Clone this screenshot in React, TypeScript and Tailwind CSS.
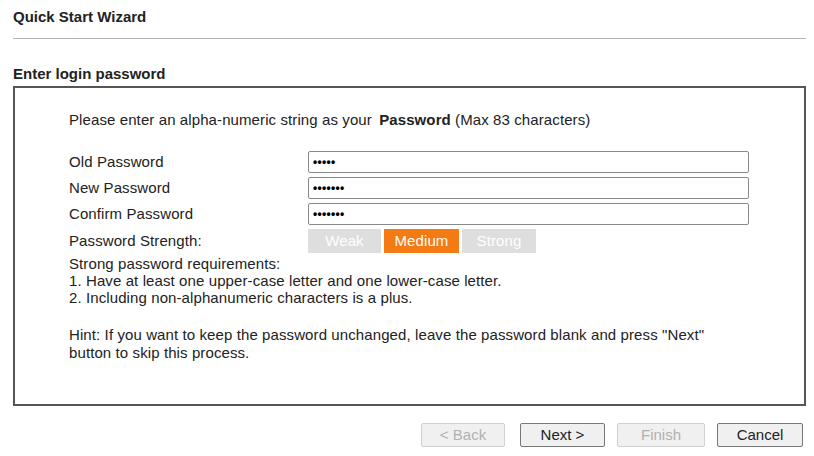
import * as React from 'react';

const fields = [
  { label: 'Old Password', dots: 5 },
  { label: 'New Password', dots: 7 },
  { label: 'Confirm Password', dots: 7 },
];

function Dots({ count }: { count: number }) {
  return (
    <span className="text-[12px] font-bold tracking-[0.3px] leading-none text-black">
      {'•'.repeat(count)}
    </span>
  );
}

export default function App() {
  return (
    <div className="w-[814px] h-[456px] bg-white text-[#222] font-['Liberation_Sans',Arial,sans-serif]">
      <div className="pl-[13px] pr-[8px]">
        <div className="pt-[8px] h-[38px] text-[15px] leading-[18px] font-bold">Quick Start Wizard</div>
        <div className="border-t border-[#b5b5b5]" />
      </div>

      <div className="pl-[13px] pr-[8px]">
        <div className="mt-[26px] text-[15px] leading-[18px] font-bold">Enter login password</div>
        <div className="mt-[3px] h-[320px] border-2 border-[#555] pl-[54px] pt-[23px] text-[15px] tracking-[0.1px]">
          <div className="leading-[17px]">
            Please enter an alpha-numeric string as your <span className="font-bold ml-[3px]">Password</span> (Max 83 characters)
          </div>

          <div className="mt-[23px] grid grid-cols-[239px_441px] gap-y-[4px]">
            {fields.map((f) => (
              <React.Fragment key={f.label}>
                <div className="flex items-center h-[22px]">{f.label}</div>
                <div className="h-[22px] border border-[#8a8a8a] rounded-[2px] flex items-center pl-[4px]">
                  <Dots count={f.dots} />
                </div>
              </React.Fragment>
            ))}
            <div className="flex items-center h-[24px]">Password Strength:</div>
            <div className="flex gap-[3px] h-[24px]">
              <div className="w-[73px] bg-[#dedede] text-white flex items-center justify-center">Weak</div>
              <div className="w-[75px] bg-[#f47a14] text-white flex items-center justify-center">Medium</div>
              <div className="w-[74px] bg-[#dedede] text-white flex items-center justify-center">Strong</div>
            </div>
          </div>

          <div className="mt-[2px] leading-[17px]">
            <div>Strong password requirements:</div>
            <div>1. Have at least one upper-case letter and one lower-case letter.</div>
            <div>2. Including non-alphanumeric characters is a plus.</div>
            <div className="h-[20px]" />
            <div className="leading-[18px]">
              Hint: If you want to keep the password unchanged, leave the password blank and press "Next"
              <br />
              button to skip this process.
            </div>
          </div>
        </div>
      </div>

      <div className="mt-[17px] flex justify-end pr-[11px] text-[15px]">
        <button className="w-[84px] h-[24px] border border-[#d0d0d0] rounded-[2px] bg-[#f0f0f0] text-[#b0b0b0]">&lt; Back</button>
        <button className="ml-[15px] w-[85px] h-[24px] border border-[#777] rounded-[2px] bg-[#f0f0f0] text-[#222]">Next &gt;</button>
        <button className="ml-[12px] w-[88px] h-[24px] border border-[#d0d0d0] rounded-[2px] bg-[#f0f0f0] text-[#b0b0b0]">Finish</button>
        <button className="ml-[12px] w-[86px] h-[24px] border border-[#777] rounded-[2px] bg-[#f0f0f0] text-[#222]">Cancel</button>
      </div>
    </div>
  );
}
